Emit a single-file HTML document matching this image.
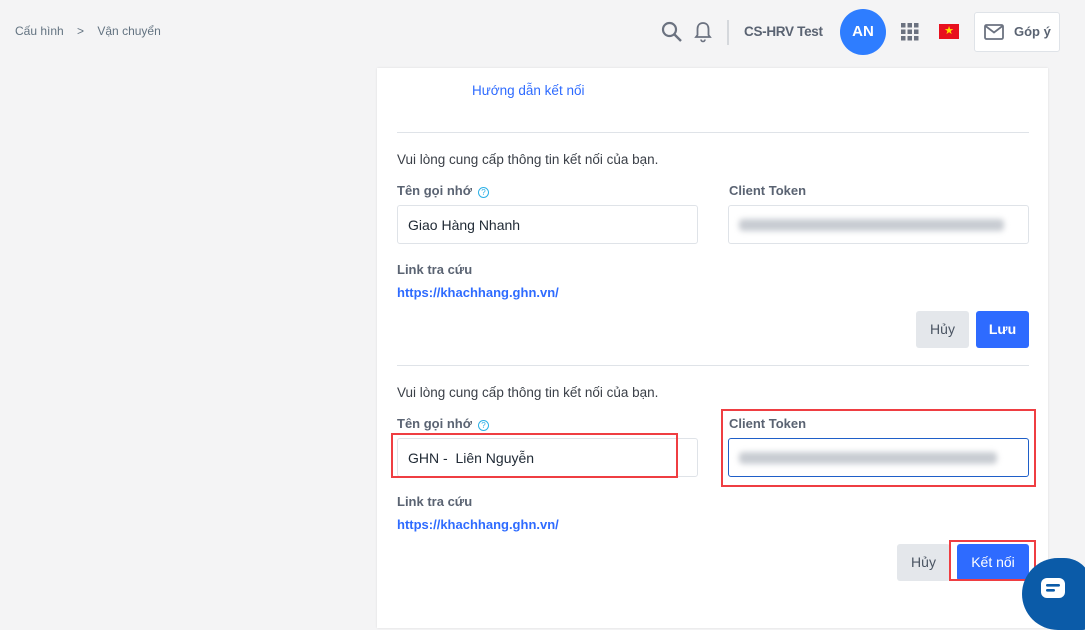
<!DOCTYPE html>
<html><head><meta charset="utf-8"><style>
*{box-sizing:border-box;margin:0;padding:0}
body{width:1085px;height:618px;overflow:hidden;background:#f4f4f5;font-family:"Liberation Sans",Arial,sans-serif;position:relative;color:#212b36}
.a{position:absolute}
.card{position:absolute;left:377px;top:68px;width:671px;height:560px;background:#fff;box-shadow:0 0 2px rgba(0,0,0,.1)}
.t{position:absolute;font-size:14px;white-space:nowrap}
.lbl{font-weight:bold;color:#5a6372;font-size:13px}
.inp{position:absolute;height:39px;border:1px solid #dfe3e8;border-radius:3px;background:#fff;font-size:14px;padding:11px 10px;color:#212b36}
.blur{position:absolute;left:10px;top:13px;height:12px;background:#c8ccd2;filter:blur(3px);border-radius:4px}
.hr{position:absolute;left:397px;width:632px;height:1px;background:#dfe3e8}
.btn{position:absolute;height:37px;border-radius:3px;font-size:14px;text-align:center;line-height:37px}
.g{background:#e4e7eb;color:#4b5563}
.b{background:#2e6bff;color:#fff}
.red{position:absolute;border:2px solid #ef3e42}
.link{color:#2e6bff;font-weight:bold;font-size:13px}
.q{display:inline-block;width:11px;height:11px;border:1px solid #2eb1e6;border-radius:50%;font-size:8px;line-height:9px;text-align:center;color:#2eb1e6;vertical-align:0px;margin-left:6px;font-weight:normal}
</style></head><body>
<div class="t" style="left:15px;top:24px;font-size:12px;color:#637381">Cấu hình &nbsp;&nbsp;&nbsp;&gt;&nbsp;&nbsp;&nbsp; Vận chuyển</div>

<svg class="a" style="left:661px;top:21px" width="22" height="22" viewBox="0 0 22 22"><circle cx="8.5" cy="8.5" r="6.5" fill="none" stroke="#6b7280" stroke-width="2.2"/><path d="M13.5 13.5L20 20" stroke="#6b7280" stroke-width="2.4"/></svg>
<svg class="a" style="left:694px;top:21px" width="18" height="22" viewBox="0 0 18 22"><path d="M9 2c-3.5 0-5.5 2.5-5.5 6v6L2 16h14l-1.5-2V8c0-3.5-2-6-5.5-6z" fill="none" stroke="#6b7280" stroke-width="1.8"/><path d="M7 18.5a2 2 0 0 0 4 0" fill="none" stroke="#6b7280" stroke-width="1.6"/></svg>
<div class="a" style="left:727px;top:20px;width:2px;height:25px;background:#d5d8dc"></div>
<div class="t" style="left:744px;top:24px;font-weight:bold;color:#5a6372;font-size:13.5px;letter-spacing:-0.3px">CS-HRV Test</div>
<div class="a" style="left:840px;top:9px;width:46px;height:46px;border-radius:50%;background:#2e7dff;color:#fff;font-weight:bold;font-size:15px;text-align:center;line-height:46px">AN</div>
<svg class="a" style="left:901px;top:23px" width="18" height="18"><g fill="#6b7280"><rect x="0" y="0" width="4.5" height="4.5"/><rect x="6.5" y="0" width="4.5" height="4.5"/><rect x="13" y="0" width="4.5" height="4.5"/><rect x="0" y="6.5" width="4.5" height="4.5"/><rect x="6.5" y="6.5" width="4.5" height="4.5"/><rect x="13" y="6.5" width="4.5" height="4.5"/><rect x="0" y="13" width="4.5" height="4.5"/><rect x="6.5" y="13" width="4.5" height="4.5"/><rect x="13" y="13" width="4.5" height="4.5"/></g></svg>
<div class="a" style="left:939px;top:24px;width:20px;height:15px;background:#e8101e;color:#ffe000;font-size:11px;text-align:center;line-height:15px">★</div>
<div class="a" style="left:974px;top:12px;width:86px;height:40px;background:#fff;border:1px solid #dfe3e8;border-radius:3px"></div>
<svg class="a" style="left:984px;top:24px" width="20" height="16"><rect x="1" y="1" width="18" height="14" rx="1.5" fill="none" stroke="#6b7280" stroke-width="1.8"/><path d="M1.5 2l8.5 6.5L18.5 2" fill="none" stroke="#6b7280" stroke-width="1.8"/></svg>
<div class="t" style="left:1014px;top:24px;font-weight:bold;color:#5a6372;font-size:13px">Góp ý</div>

<div class="card"></div>
<div class="t" style="left:472px;top:83px;color:#2e6bff;font-size:13.5px">Hướng dẫn kết nối</div>
<div class="hr" style="top:132px"></div>
<div class="t" style="left:397px;top:152px;color:#3a3f47;font-size:13.5px">Vui lòng cung cấp thông tin kết nối của bạn.</div>
<div class="t lbl" style="left:397px;top:183px">Tên gọi nhớ<span class="q">?</span></div>
<div class="t lbl" style="left:729px;top:183px">Client Token</div>
<div class="inp" style="left:397px;top:205px;width:301px">Giao Hàng Nhanh</div>
<div class="inp" style="left:728px;top:205px;width:301px"><div class="blur" style="width:265px"></div></div>
<div class="t lbl" style="left:397px;top:262px">Link tra cứu</div>
<div class="t link" style="left:397px;top:285px">https://khachhang.ghn.vn/</div>
<div class="btn g" style="left:916px;top:311px;width:53px">Hủy</div>
<div class="btn b" style="left:976px;top:311px;width:53px;font-weight:bold">Lưu</div>
<div class="hr" style="top:365px"></div>
<div class="t" style="left:397px;top:385px;color:#3a3f47;font-size:13.5px">Vui lòng cung cấp thông tin kết nối của bạn.</div>
<div class="t lbl" style="left:397px;top:416px">Tên gọi nhớ<span class="q">?</span></div>
<div class="t lbl" style="left:729px;top:416px">Client Token</div>
<div class="inp" style="left:397px;top:438px;width:301px">GHN - &nbsp;Liên Nguyễn</div>
<div class="inp" style="left:728px;top:438px;width:301px;border-color:#1f5fc8"><div class="blur" style="width:258px"></div></div>
<div class="red" style="left:391px;top:433px;width:287px;height:45px"></div>
<div class="red" style="left:721px;top:409px;width:315px;height:78px"></div>
<div class="t lbl" style="left:397px;top:494px">Link tra cứu</div>
<div class="t link" style="left:397px;top:517px">https://khachhang.ghn.vn/</div>
<div class="btn g" style="left:897px;top:544px;width:53px">Hủy</div>
<div class="btn b" style="left:957px;top:544px;width:72px">Kết nối</div>
<div class="red" style="left:949px;top:540px;width:87px;height:41px"></div>
<div class="a" style="left:1022px;top:558px;width:70px;height:72px;background:#0b5ba8;border-radius:36px 28px 10px 36px"></div>
<svg class="a" style="left:1041px;top:578px" width="24" height="20"><rect x="0" y="0" width="24" height="20" rx="6" fill="#fff"/><rect x="5" y="6" width="14" height="2.6" rx="1.3" fill="#0b5ba8"/><rect x="5" y="11" width="9" height="2.6" rx="1.3" fill="#0b5ba8"/></svg>
</body></html>
